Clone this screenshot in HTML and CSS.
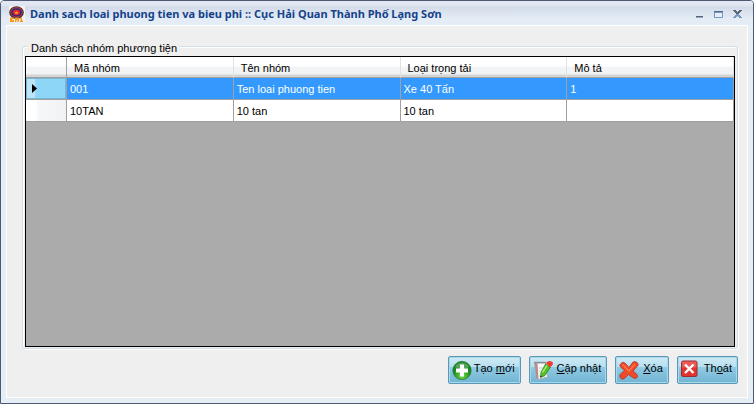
FILE: index.html
```html
<!DOCTYPE html>
<html lang="vi">
<head>
<meta charset="utf-8">
<title>Danh sach loai phuong tien va bieu phi</title>
<link rel="stylesheet" href="styles.css">
</head>
<body>
<div class="window">
  <header class="titlebar">
    <svg class="emblem" viewBox="0 0 16 16" aria-hidden="true">
      <rect width="16" height="16" fill="#f8f3f0"/>
      <ellipse cx="7.5" cy="6.5" rx="7.3" ry="6.3" fill="#3d3030"/>
      <ellipse cx="7.5" cy="6.3" rx="6.300" ry="5.300" fill="#b03a40"/>
      <ellipse cx="7.5" cy="6.4" rx="5.200" ry="4.200" fill="#1c2a88"/>
      <ellipse cx="7.5" cy="6.4" rx="3.600" ry="2.800" fill="#e8232a"/>
      <path d="M7.500 5l.6 1 1.400.1-1 .9.3 1.200-1.300-.6-1.300.6.3-1.200-1-.9 1.400-.1z" fill="#f6a52b"/>
      <path d="M1 11.500h4V13H3v1h2v2H1zM6 11.500h4V16H8.500v-2h-1v2H6zM11 12l2-.5V14.500h1V16h-3v-1.500h.6V13H11z" fill="#f5961e"/>
    </svg>
    <h1 class="title">Danh sach loai phuong tien va bieu phi :: Cục Hải Quan Thành Phố Lạng Sơn</h1>
    <div class="controls">
      <button type="button" class="control" aria-label="Thu nhỏ"><svg viewBox="0 0 10 10"><path d="M1 7h7v1H1z" fill="#596472"/><path d="M1 8h7v1H1z" fill="#91a9c6"/></svg></button>
      <button type="button" class="control" aria-label="Phóng to"><svg viewBox="0 0 10 10"><path d="M0 2h9v2H0z" fill="#566b86"/><path d="M.5 3.500h8v5h-8z" fill="#e5eefb" stroke="#7795be"/></svg></button>
      <button type="button" class="control" aria-label="Đóng"><svg viewBox="0 0 10 10"><path d="M0 1h3v1h1v1h1V2h1V1h3v1H8v1H7v1H6v1H3V4H2V3H1V2H0z" fill="#5a6575"/><path d="M3 5h3v1h1v1h1v1h1v1H6V8H5V7H4v1H3v1H0V8h1V7h1V6h1z" fill="#7798c4"/></svg></button>
    </div>
  </header>
  <main class="panel">
    <section class="group" aria-labelledby="group-title">
      <h2 id="group-title" class="group-title">Danh sách nhóm phương tiện</h2>
      <div class="grid">
        <table>
          <colgroup><col class="marker-col"><col><col><col><col></colgroup>
          <thead>
            <tr><th aria-label="Dòng"></th><th scope="col">Mã nhóm</th><th scope="col">Tên nhóm</th><th scope="col">Loại trọng tải</th><th scope="col">Mô tả</th></tr>
          </thead>
          <tbody>
            <tr class="selected"><th class="marker"><svg viewBox="0 0 5 9" aria-hidden="true"><path d="M0 0l5 4.500L0 9z"/></svg></th><td>001</td><td>Ten loai phuong tien</td><td>Xe 40 Tấn</td><td>1</td></tr>
            <tr><th class="marker"></th><td>10TAN</td><td>10 tan</td><td>10 tan</td><td></td></tr>
          </tbody>
        </table>
      </div>
    </section>
    <div class="actions">
      <button type="button" class="action">
        <svg viewBox="0 0 20 20" aria-hidden="true">
          <defs><radialGradient id="green" cy=".8"><stop offset="0" stop-color="#6fdc45"/><stop offset="1" stop-color="#188521"/></radialGradient></defs>
          <circle cx="10" cy="10.500" r="9.200" fill="url(#green)" stroke="#28702d" stroke-width=".6"/>
          <path d="M3 7a8 8 0 0 1 14 0q-7 4-14 0z" fill="#fff" opacity=".25"/>
          <path d="M8 4.500h4v4h4v4h-4v4H8v-4H4v-4h4z" fill="#fff"/>
        </svg>
        <span>Tạo <u>m</u>ới</span>
      </button>
      <button type="button" class="action action-spaced">
        <svg viewBox="0 0 20 20" aria-hidden="true">
          <path d="M1.500 3l11 0 2 14-10 2.500z" fill="#fafafa" stroke="#a8a8ae" stroke-width=".8"/>
          <path d="M1.500 3l3 .5L5.500 19l-2-.5z" fill="#ba8c88"/>
          <path d="M1.500 2.500h11" stroke="#555" stroke-width="1.500" stroke-dasharray="1 1"/>
          <path d="M6 8h5M6 11h3M6 16h6" stroke="#c5c7ca"/>
          <path d="M12.500 4l5 3L12 15.500l-4.500 2L8 12.500z" fill="#55bd28" stroke="#2d801f" stroke-width=".7"/>
          <path d="M14 5.500L9.500 12.500" stroke="#a1eb68" stroke-width="1.500"/>
          <path d="M13 3Q15.500 0 18.500 1.500T18.500 6L17 7.500z" fill="#ee3c31"/>
          <path d="M7.800 15.500l1.500 1-2.300 1z" fill="#333"/>
        </svg>
        <span><u>C</u>ập nhật</span>
      </button>
      <button type="button" class="action action-spaced">
        <svg viewBox="0 0 20 20" aria-hidden="true">
          <path d="M2 3.500Q4 1 6.500 3.500l3.500 4 3.500-5q2-2 4.500 0t0 4L14 11l4 3.500q1.500 3.500-2 4l-2.500-1-4-3-3.500 3.500q-3 2.500-4.500 0t0-4l4-3.500-4-3.500Q0 5 2 3.500z" fill="#ee4b28" stroke="#b23424" stroke-width=".8"/>
          <path d="M3.500 4.500l6.500 6.500 6-7" fill="none" stroke="#ff7a50" stroke-width="1.200"/>
        </svg>
        <span><u>X</u>óa</span>
      </button>
      <button type="button" class="action action-exit">
        <svg viewBox="0 0 20 20" aria-hidden="true">
          <rect x="2.500" y="1" width="15.500" height="15.500" rx="1.500" fill="#e5332e" stroke="#9d2b35"/>
          <path d="M3 1.500h14.500v6H3z" fill="#fff" opacity=".2"/>
          <path d="M6 4.500l8.500 8.500M14.500 4.500L6 13" stroke="#fff" stroke-width="2.400"/>
        </svg>
        <span>Th<u>o</u>át</span>
      </button>
    </div>
  </main>
</div>
</body>
</html>
```
FILE: styles.css
```css
* {
  box-sizing: border-box;
}

body {
  margin: 0;
  background: #fff;
  color: #000;
  font: 11px/16px "Liberation Sans", Arial, sans-serif;
}

button {
  font: inherit;
  color: inherit;
}

.window {
  display: flex;
  flex-direction: column;
  min-height: 100vh;
  padding: 0 5px 5px;
  border: 1px solid #4e5a73;
  border-radius: 4px 4px 0 0;
  background: #e5edf5;
}

.titlebar {
  display: flex;
  align-items: center;
  gap: 5px;
  height: 24px;
  margin: 0 -5px;
  padding: 2px 10px 0 8px;
  border-radius: 3px 3px 0 0;
  background: linear-gradient(#e4e9f3 0, #dfe4f1 5px, #d3dbe9 6px, #e4edf5 18px);
}

.emblem {
  width: 16px;
  height: 16px;
}

.title {
  flex: 1;
  margin: 0;
  color: #15428b;
  font: bold 11px/16px "Noto Sans", sans-serif;
  white-space: nowrap;
}

.controls {
  display: flex;
  gap: 9px;
}

.control {
  width: 10px;
  height: 10px;
  padding: 0;
  border: 0;
  background: none;
}

.control svg {
  display: block;
}

.panel {
  flex: 1;
  display: flex;
  flex-direction: column;
  gap: 7px;
  padding: 20px 9px 13px 15px;
  border: 1px solid #fff;
  background: #efefef;
}

.group {
  flex: 1;
  display: flex;
  flex-direction: column;
  padding: 0 2px 1px;
  border: 1px solid #d3dde5;
  border-radius: 3px;
  box-shadow: 1px 1px 0 #fff, inset 1px 1px 0 #fff;
}

.group-title {
  align-self: flex-start;
  margin: -7px 0 0 3px;
  padding: 0 3px;
  background: #efefef;
  font: inherit;
}

.grid {
  flex: 1;
  border: 1px solid #000;
  background: #ababab;
}

table {
  width: 100%;
  table-layout: fixed;
  border-collapse: separate;
  border-spacing: 0;
}

.marker-col {
  width: 41px;
}

th,
td {
  height: 22px;
  padding: 1px 3px 0;
  border-right: 1px solid #a0a0a0;
  border-bottom: 1px solid #a0a0a0;
  background: #fff;
  font-weight: normal;
  text-align: left;
  white-space: nowrap;
}

thead th {
  height: 21px;
  padding: 1px 7px 0;
  border-right-color: #dfe1e3;
  background: linear-gradient(#fff 45%, #f3f4f6 50%, #f1f2f4 85%, #d5d5d5 90%);
}

thead th:first-child {
  border-right-color: #a0a0a0;
}

.marker {
  padding: 0 6px;
  background: linear-gradient(90deg, #fff 25%, #f5f7f9 30%, #f1f2f4);
}

.marker svg {
  display: block;
  width: 5px;
  height: 9px;
}

.selected td {
  background: #3399ff;
  color: #fff;
}

.selected .marker {
  background: linear-gradient(90deg, #bce4f6 23%, #8ed6f7 24%);
  box-shadow: inset 0 0 0 1px #78b5d3;
}

.actions {
  display: flex;
  justify-content: flex-end;
  gap: 8px;
}

.action {
  display: flex;
  align-items: flex-start;
  gap: 2px;
  height: 28px;
  padding: 3px 5px 0 3px;
  border: 1px solid #5c97b5;
  border-radius: 2px;
  background: linear-gradient(#d0eaf5, #b7dfef 38%, #91cae3 40%, #70b4d2);
  box-shadow: inset 0 0 0 1px #a9d8ec;
}

.action svg {
  width: 20px;
  height: 20px;
}

.action-spaced {
  gap: 4px;
}

.action-exit {
  padding-left: 1px;
  gap: 5px;
}
```
